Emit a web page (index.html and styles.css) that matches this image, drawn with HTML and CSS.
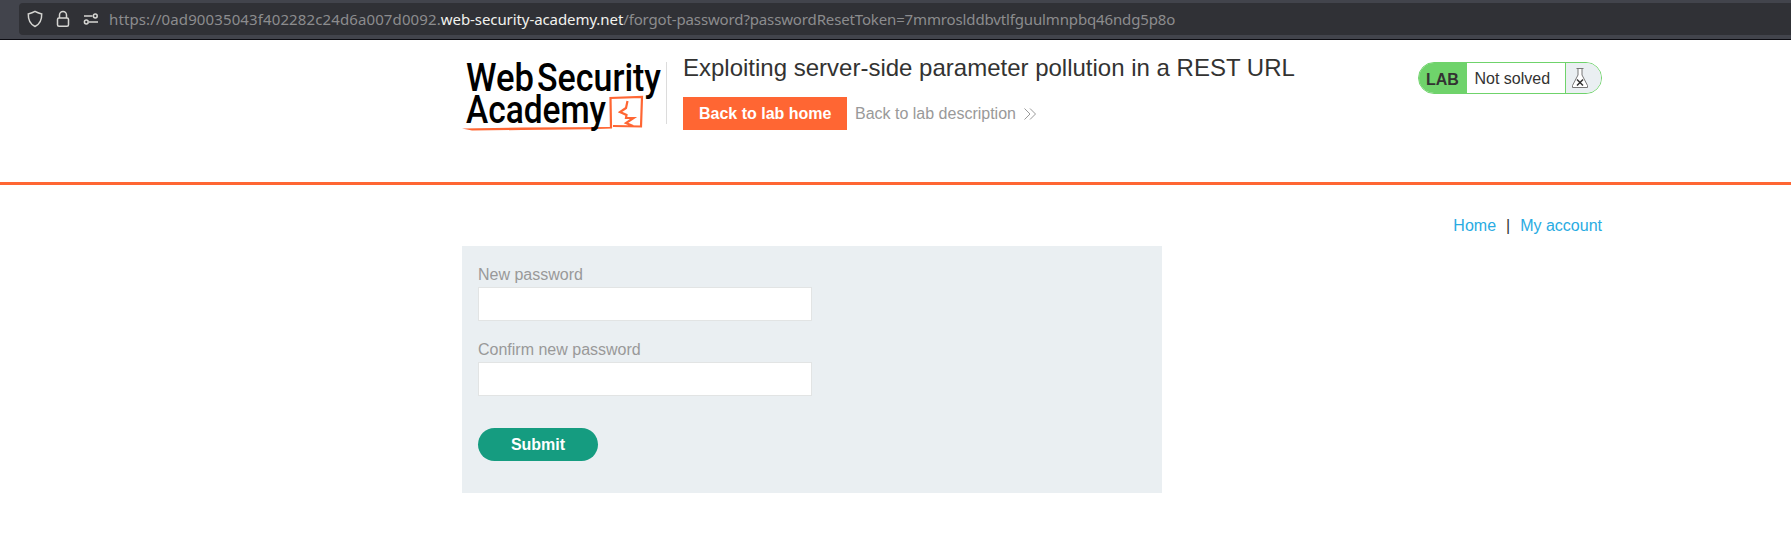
FILE: index.html
```html
<!DOCTYPE html>
<html lang="en">
<head>
<meta charset="utf-8">
<title>Exploiting server-side parameter pollution in a REST URL</title>
<link rel="stylesheet" href="styles.css">
</head>
<body>
<div class="browser-bar">
  <div class="url-field">
    <svg class="shield" width="16" height="18" viewBox="0 0 16 18"><path d="M8 1.4C10 2.6 12 3.300 14.700 3.900C14.900 9.500 13.300 14 8 16.500C2.700 14 1.100 9.500 1.300 3.900C4 3.300 6 2.600 8 1.400Z"/></svg>
    <svg class="lock" width="14" height="18" viewBox="0 0 14 18"><rect x="1.500" y="8" width="11" height="8.300" rx="1.500"/><path d="M3.500 8V5a3.500 3.500 0 0 1 7 0V8"/></svg>
    <svg class="perms" width="16" height="12" viewBox="0 0 16 12"><path d="M1 3H9.500M6 9H15"/><circle cx="12.300" cy="3" r="1.900"/><circle cx="3.300" cy="9" r="1.900"/></svg>
    <span class="url"><span class="host">https://0ad90035043f402282c24d6a007d0092.</span><span class="domain">web-security-academy.net</span><span class="path">/forgot-password?passwordResetToken=7mmroslddbvtlfguulmnpbq46ndg5p8o</span></span>
  </div>
</div>
<header class="lab-header">
  <div class="container header-row">
    <svg class="logo" width="204" height="74" viewBox="0 0 204 74">
      <path class="swoosh" d="M0 66.500L60 65.500L150 65V66.500L128 67.300L60 68L10 68.500Z"/>
      <path class="mark" d="M149 66L148.500 36L180 35L179 64.500L151 64M165.500 39L164 46L158 50L164.500 53L164 56L171.500 56L164 61L171 64"/>
      <g class="logo-text">
        <text x="4" y="28.700" textLength="68" lengthAdjust="spacingAndGlyphs">Web</text>
        <text x="75" y="28.700" textLength="124" lengthAdjust="spacingAndGlyphs">Security</text>
        <text x="4" y="61" textLength="140" lengthAdjust="spacingAndGlyphs">Academy</text>
      </g>
    </svg>
    <div class="divider"></div>
    <div class="title-block">
      <h2>Exploiting server-side parameter pollution in a REST URL</h2>
      <div class="actions">
        <a class="home-button">Back to lab home</a>
        <a class="description-link">Back to lab description<svg width="12" height="12" viewBox="0 0 12 12"><path d="M.5.5L6 6L.5 11.500M6 .5L11.500 6L6 11.500"/></svg></a>
      </div>
    </div>
    <div class="status">
      <strong>LAB</strong><span>Not solved</span>
      <div class="flask"><svg width="18" height="22" viewBox="0 0 18 22"><path class="glass" d="M5.500 1.500H12.500M7 1.500V8L1.500 18.500V20.500H16.500V18.500L11 8V1.500"/><path class="cross" d="M6 12.500L12 18.500M12 12.500L6 18.500"/></svg></div>
    </div>
  </div>
</header>
<main class="container">
  <nav><a>Home</a><span>|</span><a>My account</a></nav>
  <form class="panel">
    <label for="p1">New password</label>
    <input id="p1" type="password">
    <label for="p2">Confirm new password</label>
    <input id="p2" type="password">
    <button type="button">Submit</button>
  </form>
</main>
</body>
</html>
```
FILE: styles.css
```css
* { box-sizing: border-box; }
body { margin: 0; background: #fff; color: #333332; font: 16px/20px "Liberation Sans", Arial, sans-serif; overflow: hidden; }
.browser-bar { height: 40px; padding: 3px 0 0 19px; background: #42444c; border-bottom: 1px solid #0c0c12; }
.url-field { display: flex; align-items: center; height: 32px; padding-left: 8px; background: #303136; border-radius: 4px 0 0 4px; }
.url-field svg { fill: none; stroke: #d6d6d3; stroke-width: 1.5; flex: none; }
.lock { margin-left: 13px; }
.perms { margin-left: 13px; }
.url { margin-left: 10px; color: #8c8c8e; font: 15px/20px "Noto Sans", sans-serif; white-space: nowrap; }
.host { letter-spacing: 0.115px; }
.domain { color: #f2f2ee; letter-spacing: -0.08px; }
.path { letter-spacing: -0.14px; }
.container { width: 1140px; margin-left: 462px; }
.lab-header { height: 145px; border-bottom: 3px solid #ff6633; }
.header-row { display: flex; align-items: flex-start; }
.logo { margin-top: 22px; flex: none; overflow: visible; }
.logo-text { font: 500 38px Roboto, sans-serif; fill: #000; }
.swoosh { fill: #ff6633; }
.mark { fill: none; stroke: #ff6633; stroke-width: 2.2; }
.divider { width: 1px; height: 62px; margin-top: 22px; background: #dcdcdc; }
.title-block { margin-top: 14px; padding-left: 16px; }
h2 { margin: 0; font-size: 24px; line-height: 28px; font-weight: 400; white-space: nowrap; }
.actions { display: flex; align-items: center; margin-top: 15px; }
.home-button { height: 33px; padding: 0 16px; line-height: 33px; background: #ff6633; color: #fff; font-weight: 700; }
.description-link { display: flex; align-items: center; margin-left: 7.5px; color: #999; }
.description-link svg { margin-left: 8px; fill: none; stroke: #999; stroke-width: 1; }
.status { display: flex; width: 184px; height: 32px; margin: 22px 0 0 auto; line-height: 31px; border: 1px solid #6fd36b; border-radius: 16px; overflow: hidden; }
.status strong { width: 48px; padding-left: 7px; background: #6fd36b; line-height: 33px; }
.status span { flex: 1; padding-left: 7.5px; }
.flask { display: flex; align-items: center; width: 36px; padding-left: 5px; border-left: 1px solid #6fd36b; background: #eaeff2; }
.glass { fill: #fff; stroke: #777; stroke-width: 1; }
.cross { stroke: #333; stroke-width: 1.5; }
nav { display: flex; justify-content: flex-end; padding-top: 31px; color: #333332; }
nav span { margin: 0 10px; }
nav a { color: #29abe2; }
.panel { display: flex; flex-direction: column; align-items: flex-start; width: 700px; height: 247px; margin-top: 10px; padding: 19px 16px; background: #eaeff2; color: #999; }
.panel label { line-height: 20px; }
.panel input { width: 334px; height: 34px; margin: 2px 0 19px; border: 1px solid #e2e4e4; background: #fff; }
.panel button { width: 120px; height: 33px; margin-top: 13px; padding: 0; border: 0; border-radius: 16.5px; background: #159c80; color: #fff; font: 700 16px "Liberation Sans", Arial, sans-serif; }
```
